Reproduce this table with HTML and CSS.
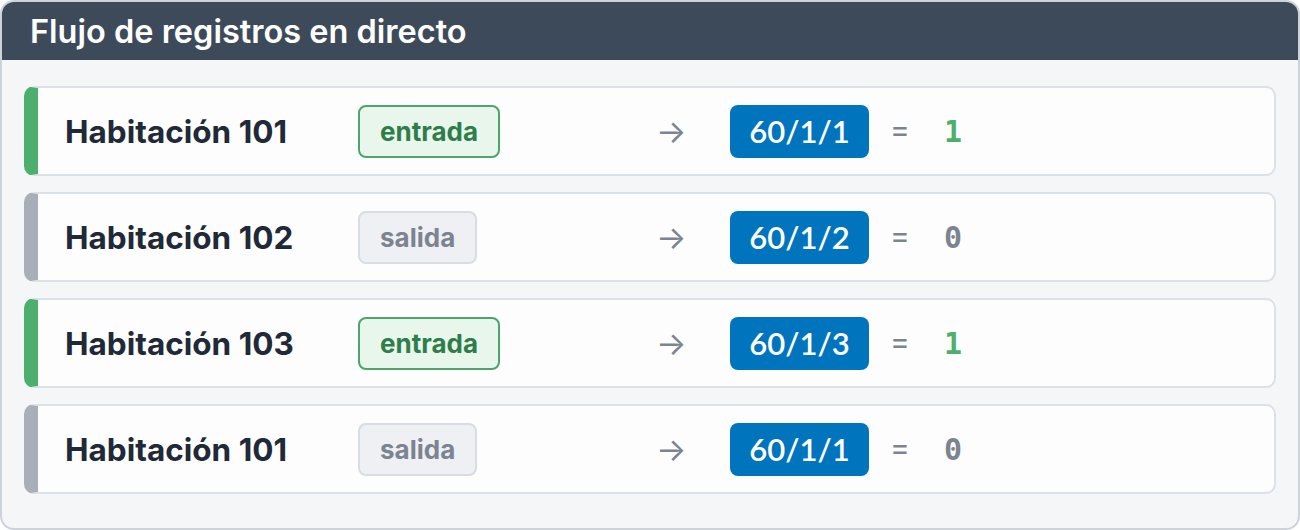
FILE: index.html
```html
<!DOCTYPE html>
<html lang="es">
<head>
  <meta charset="UTF-8">
  <meta name="viewport" content="width=device-width, initial-scale=1.0">
  <title>Flujo de registros en directo</title>
  <link rel="stylesheet" href="styles.css">
</head>
<body>
  <div class="panel">
    <div class="panel-head">
      <h2>Flujo de registros en directo</h2>
    </div>
    <div class="feed">
      <div class="entry in">
        <span class="room">Habitación 101</span>
        <span><span class="tag tag-in">entrada</span></span>
        <span class="arrow">→</span>
        <span><span class="code">60/1/1</span></span>
        <span class="eq">=</span>
        <span class="result">1</span>
      </div>
      <div class="entry out">
        <span class="room">Habitación 102</span>
        <span><span class="tag tag-out">salida</span></span>
        <span class="arrow">→</span>
        <span><span class="code">60/1/2</span></span>
        <span class="eq">=</span>
        <span class="result">0</span>
      </div>
      <div class="entry in">
        <span class="room">Habitación 103</span>
        <span><span class="tag tag-in">entrada</span></span>
        <span class="arrow">→</span>
        <span><span class="code">60/1/3</span></span>
        <span class="eq">=</span>
        <span class="result">1</span>
      </div>
      <div class="entry out">
        <span class="room">Habitación 101</span>
        <span><span class="tag tag-out">salida</span></span>
        <span class="arrow">→</span>
        <span><span class="code">60/1/1</span></span>
        <span class="eq">=</span>
        <span class="result">0</span>
      </div>
    </div>
  </div>
</body>
</html>
```

FILE: styles.css
```css
/* Panel de registros */
body {
  margin: 0;
  font-family: Inter, "Noto Sans", sans-serif;
  background: #fff;
}
.panel {
  width: 1300px;
  height: 530px;
  box-sizing: border-box;
  border: 2px solid #cdd3db;
  border-radius: 14px;
  background: #f4f6f8;
  overflow: hidden;
}
.panel-head {
  background: #3d4a5a;
  height: 58px;
  display: flex;
  align-items: center;
  padding: 0 28px;
}
.panel-head h2 {
  margin: 0;
  color: #fff;
  font-size: 32.5px;
  font-weight: 600;
}
.feed {
  display: flex;
  flex-direction: column;
  gap: 16px;
  padding: 26px 22px 0 22px;
}
.entry {
  height: 90px;
  box-sizing: border-box;
  background: #fdfdfd;
  border: 2px solid #dce1e8;
  border-left: 14px solid #4caf6e;
  border-radius: 10px;
  display: grid;
  grid-template-columns: 293px 298px 74px 160px 54px auto;
  align-items: center;
  padding-left: 27px;
}
.entry.out {
  border-left-color: #a9afb8;
}
.room {
  font-size: 31.5px;
  font-weight: 700;
  color: #1f2937;
}
.tag {
  display: inline-block;
  box-sizing: border-box;
  height: 53px;
  line-height: 49px;
  padding: 0 20px;
  border-radius: 8px;
  font-size: 26px;
  font-weight: 700;
}
.tag-in {
  background: #e8f6ec;
  border: 2px solid #4ba56c;
  color: #2e7d4a;
}
.tag-out {
  background: #eef0f4;
  border: 2px solid #d8dce3;
  color: #7c8491;
}
.arrow {
  color: #7c8491;
  font-size: 32px;
}
.code {
  display: inline-block;
  height: 53px;
  line-height: 53px;
  width: 139px;
  text-align: center;
  border-radius: 8px;
  background: #0075be;
  color: #fff;
  font-family: Lato, sans-serif;
  font-size: 31px;
  font-weight: 600;
}
.eq {
  color: #7c8491;
  font-size: 30px;
  line-height: 1;
  padding-bottom: 4px;
}
.result {
  font-family: "DejaVu Sans Mono", monospace;
  font-size: 30px;
  font-weight: 700;
  color: #7c8491;
}
.in .result {
  color: #4caf6e;
}
```
